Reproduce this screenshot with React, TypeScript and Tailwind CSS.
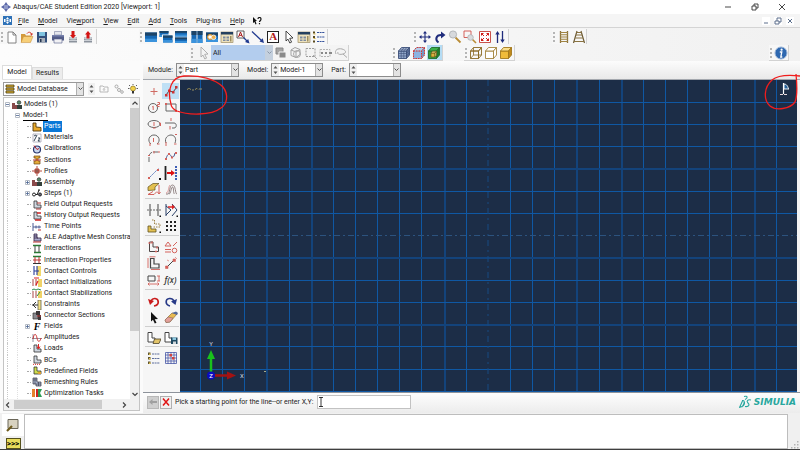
import React from "react";

type Kids = { children?: React.ReactNode };

/* ---------- drawing helpers ---------- */

function Ic({ children }: Kids) {
  return (
    <svg width="14" height="14" viewBox="0 0 14 14" fill="none" className="shrink-0" aria-hidden="true">
      {children}
    </svg>
  );
}

function Tic({ children }: Kids) {
  return (
    <svg width="10" height="10" viewBox="0 0 10 10" fill="none" className="shrink-0" aria-hidden="true">
      {children}
    </svg>
  );
}

function BlueWindow({ x, y, w, h }: { x: number; y: number; w: number; h: number }) {
  return (
    <g>
      <rect x={x} y={y} width={w} height={h} fill="#1668b4" />
      <rect x={x} y={y} width={w} height={h / 3} fill="#1c4468" />
      <rect x={x} y={y + h * 0.65} width={w} height={h * 0.35} fill="#3b93dc" />
    </g>
  );
}

function Cube({ front, top, side, line, mesh }: { front: string; top: string; side: string; line: string; mesh?: boolean }) {
  return (
    <g stroke={line} strokeWidth="0.9" strokeLinejoin="round">
      <path d="M1.5 5h8v7.500h-8z" fill={front} />
      <path d="M1.500 5l3-3.500h8l-3 3.500z" fill={top} />
      <path d="M9.500 5l3-3.500v7.500l-3 3.500z" fill={side} />
      {mesh && <path d="M4.200 5v7.500M6.800 5v7.500M1.500 7.500h8l3-3.500M1.500 10h8l3-3.500M4.200 5l3-3.500M6.800 5l3-3.500M3 3.200h8v7.500" strokeWidth="0.6" />}
    </g>
  );
}

const calendar = (
  <Ic>
    <rect x="1" y="2" width="12" height="10.500" fill="#efe3bd" stroke="#8a7a50" strokeWidth=".6" />
    <rect x="1" y="2" width="12" height="2.500" fill="#24405f" />
    <path d="M3 6.500h2.500v2H3zM6.500 6.500H9v2H6.500zM3 9.500h2.500v1.500H3zM6.500 9.500H9v1.500H6.500z" fill="#7d8ba0" />
    <path d="M10 6h1.500v5.500H10z" fill="#9c8d60" />
  </Ic>
);

const cursor = (fill: string, line: string) => (
  <Ic>
    <path d="M4 1l7 7-3.300.3 1.900 3.800-1.800.9-1.800-3.900L4 11z" fill={fill} stroke={line} strokeWidth=".9" />
  </Ic>
);

const fileIcons: [string, React.ReactNode][] = [
  ["New", <Ic><path d="M3 2h5l3 3v8H3z" fill="#fff" stroke="#777" strokeWidth=".9" /><path d="M8 2v3h3" stroke="#777" strokeWidth=".9" /></Ic>],
  ["Open", <Ic><path d="M1 12V4h4l1 1.500h5V12z" fill="#d49a3c" /><path d="M1 12.500l2.500-6H13l-2.500 6z" fill="#f7cf78" stroke="#c48a34" strokeWidth=".5" /><path d="M7 3.500C8.500 1.500 11 2 11.500 4" stroke="#d23c2c" /><path d="M10 3.500h3L11.700 6z" fill="#d23c2c" /></Ic>],
  ["Save", <Ic><path d="M2 2h10v10.500H2z" fill="#33507d" /><path d="M4 2h6v4H4z" fill="#7fc3e0" /><path d="M4 8h6v4.500H4z" fill="#a9b0ba" /><path d="M5 9h1.500v3H5z" fill="#23344e" /></Ic>],
  ["Print", <Ic><path d="M3.500 1.500h7V5h-7z" fill="#e5e7ee" stroke="#7a80a0" strokeWidth=".6" /><path d="M1 5h12v5.500H1z" fill="#535c88" /><path d="M1 5h12v1.500H1z" fill="#7680ac" /><path d="M3 9h8v4H3z" fill="#f1f1f4" stroke="#535c88" strokeWidth=".6" /></Ic>],
  ["Import", <Ic><path d="M3 7h8v5.500H3z" fill="#8b929c" /><ellipse cx="7" cy="8" rx="4" ry="1.500" fill="#c9ced4" /><path d="M3 10h8v1H3z" fill="#ccd0d6" /><path d="M5.500 1h3v4H10L7 8.500 4 5h1.500z" fill="#d31414" /></Ic>],
  ["Export", <Ic><path d="M3 7h8v5.500H3z" fill="#8b929c" /><ellipse cx="7" cy="8" rx="4" ry="1.500" fill="#c9ced4" /><path d="M3 10h8v1H3z" fill="#ccd0d6" /><path d="M5.500 8.500v-4H4L7 1l3 3.500H8.500v4z" fill="#d31414" /></Ic>],
];

const viewIcons: [string, React.ReactNode][] = [
  ["Create viewport", <Ic><BlueWindow x={1} y={2.5} w={12} h={9.5} /></Ic>],
  ["Cascade", <Ic><BlueWindow x={0.5} y={1} w={9} h={6} /><path d="M3 4.500h11v8.500H3z" fill="#f7f7f7" /><BlueWindow x={4} y={5.5} w={9.5} h={7} /></Ic>],
  ["Tile horizontally", <Ic><BlueWindow x={1} y={1} w={12} h={5.5} /><BlueWindow x={1} y={7.5} w={12} h={5.500} /></Ic>],
  ["Tile vertically", <Ic><BlueWindow x={1.500} y={1} w={5} h={12} /><BlueWindow x={7.500} y={1} w={5} h={12} /></Ic>],
  ["Link viewports", <Ic><BlueWindow x={1} y={2.5} w={12} h={9.5} /><circle cx="5" cy="7" r="2.300" fill="#fff" stroke="#e39a32" strokeWidth="1.200" /><circle cx="8.600" cy="7.300" r="2.300" fill="#f0b04d" stroke="#fff" strokeWidth=".8" /></Ic>],
  ["Annotation manager", calendar],
  ["Text arrow", <Ic><path d="M1 1h7v7H1z" fill="#fff" stroke="#333" strokeWidth=".8" /><path d="M2.500 7l2-5 2 5M3.200 5.300h2.600" stroke="#a31717" /><path d="M7.500 7.500L12 12" stroke="#203a8f" strokeWidth="1.300" /><path d="M13.500 13.500L9 12l3.200-3z" fill="#203a8f" /></Ic>],
  ["Arrow", <Ic><path d="M1 1.500L11 11" stroke="#203a8f" strokeWidth="1.300" /><path d="M13 13L8.500 11.500 11.700 8.300z" fill="#203a8f" /></Ic>],
  ["Text", <span className="flex h-3 w-3 items-center justify-center border border-[#222] bg-white font-['Liberation_Serif',serif] text-[11px] leading-none font-bold text-[#b01818]">A</span>],
  ["Select", cursor("#fff", "#333")],
  ["Manager", calendar],
  ["List", <Ic><path d="M1 1.500h2v2H1zM1 6h2v2H1zM1 10.500h2v2H1z" fill="#5a4a1e" /><path d="M1.500 3.500h2v1h-2zM1.500 8h2v1h-2z" fill="#d8b648" /><path d="M5 2.500h8M5 7h8M5 11.500h8" stroke="#34529c" strokeDasharray="2 .6" /></Ic>],
];

const moveIcons: [string, React.ReactNode][] = [
  ["Pan", <Ic><path d="M7 2v10M2 7h10" stroke="#1f2c7c" strokeWidth="1.100" /><path d="M7 1l2 2.500H5zM7 13l2-2.500H5zM1 7l2.500-2v4zM13 7l-2.500-2v4z" fill="#1f2c7c" /></Ic>],
  ["Rotate", <Ic><path d="M5.500 12.500C2 10 2.500 4.500 9 5" stroke="#1f2c7c" strokeWidth="2" /><path d="M8 1.500l4.500 3.500L8 8.500z" fill="#1f2c7c" /></Ic>],
  ["Magnify", <Ic><path d="M7.500 7.500l5 5" stroke="#b98c34" strokeWidth="1.800" /><circle cx="5" cy="4.500" r="3.600" fill="#d7d9dc" stroke="#a7a9ad" strokeWidth=".8" /></Ic>],
  ["Zoom box", <Ic><path d="M1 1h7v6.500H1z" stroke="#d0504a" strokeWidth=".9" /><path d="M9.500 9.500l3.500 3.500" stroke="#b98c34" strokeWidth="1.600" /><circle cx="7.500" cy="7.500" r="2.800" fill="#d9dbde" stroke="#a7a9ad" strokeWidth=".7" /></Ic>],
  ["Auto-fit", <Ic><path d="M1.500 1.500h11v11h-11z" fill="#fff" stroke="#c8534c" /><path d="M3 3h3L3 6zM11 3v3L8 3zM3 11V8l3 3zM11 11H8l3-3z" fill="#d01d17" /><path d="M4 4l2 2M10 4L8 6M4 10l2-2M10 10L8 8" stroke="#d01d17" /></Ic>],
  ["Cycle", <Ic><path d="M4.500 13V3M9.500 1v10" stroke="#1f2c7c" strokeWidth="1.300" /><path d="M4.500 1l2.200 3.500H2.300zM9.500 13l2.200-3.500H7.300z" fill="#1f2c7c" /></Ic>],
];

const perspIcons: [string, React.ReactNode][] = [
  ["Parallel", <Ic><path d="M3.500 1v12M10.500 1v12" stroke="#87703e" strokeWidth="1.300" /><path d="M3 2.500h8M3 4.800h8M3 7h8M3 9.300h8M3 11.500h8" stroke="#a08442" strokeWidth="1.100" /></Ic>],
  ["Perspective", <Ic><path d="M5 1L1.500 13M9 1l3.500 12" stroke="#6e5d38" strokeWidth="1.200" /><path d="M4.500 2.500h5M4 5h6M3.300 8h7.500M2 11.500h10" stroke="#8a7340" strokeWidth="1.200" /></Ic>],
];

const selIcons: [string, React.ReactNode][] = [
  ["Closest", <Ic><path d="M2 2h7v6H2z" fill="#a4a4a4" stroke="#888" /><path d="M5 6h7v6H5z" fill="#8a8a8a" stroke="#f4f4f4" /></Ic>],
  ["Inside", <Ic><path d="M2 4l4-2.500 5 2v5l-4 3-5-2zM2 4l5 2v5.500M7 6l4-2.500" stroke="#a2a2a2" /><circle cx="8" cy="8" r="3.500" stroke="#aaa" /></Ic>],
  ["Box", <Ic><path d="M2 2.500h9v8H2z" stroke="#9c9c9c" strokeDasharray="2 1" /><path d="M9 9l4 4" stroke="#aaa" /></Ic>],
  ["Edges", <Ic><path d="M1 3.500h10v7H1z" stroke="#b4b4b4" strokeDasharray="2 1" /><path d="M2 7h2M6 7h2M10 7h3" stroke="#888" strokeWidth="2" /></Ic>],
  ["Lasso", <Ic><path d="M2 8C0 4 4 2 8 3s5 4 1 5-6 0-5-2M9 8l4 3.500" stroke="#aaa" /></Ic>],
];

const renderIcons: [string, React.ReactNode][] = [
  ["Wire mesh", <Ic><Cube front="#93a9cc" top="#b4c4de" side="#6c84ae" line="#3c4f78" mesh /></Ic>],
  ["Hidden mesh", <Ic><Cube front="#8db4e2" top="#b5cdea" side="#7297c6" line="#8aa6cc" /><path d="M1.500 5h8v7.500h-8zM1.500 5l3-3.500h8l-3 3.500M12.500 1.500V9l-3 3.500" stroke="#e0352c" strokeDasharray="1.500 1" /></Ic>],
  ["Shaded mesh", <Ic><Cube front="#2f9d3c" top="#3bb04a" side="#1f7a2c" line="#226e2d" /><path d="M4 7h4v4H4z" fill="#d8b23c" stroke="#6a5414" strokeWidth=".7" /><path d="M4 7l1.500-1.800h4L8 7zM8 7l1.500-1.800v4L8 11z" fill="#e6cf77" stroke="#6a5414" strokeWidth=".6" /></Ic>],
];

const styleIcons: [string, React.ReactNode][] = [
  ["Wireframe", <Ic><Cube front="none" top="none" side="none" line="#8a6a24" /><path d="M4.500 1.500V9h8M4.500 9l-3 3.500" stroke="#8a6a24" strokeWidth=".8" /></Ic>],
  ["Hidden", <Ic><Cube front="#fff" top="#fff" side="#fff" line="#a3833c" /></Ic>],
  ["Shaded", <Ic><Cube front="#f0bb3a" top="#fadf8c" side="#c08a1c" line="#a3781c" /></Ic>],
];

/* ---------- sketch palette ---------- */

const G = "#666";
const R = "#d4625c";

const palette: [string, React.ReactNode][][] = [
  [
    ["Point", <Ic><path d="M7 4v7M3.500 7.500h7" stroke="#d06a62" /></Ic>],
    ["Lines", <Ic><path d="M2 11l3-4 4 1 4-5" stroke="#444" /><path d="M1 10h2.500v2.500H1zM4 5.500h2.500V8H4zM8 7h2.500v2.500H8zM11 2h2.500v2.500H11z" fill="#c33" /></Ic>],
    ["Circle", <Ic><circle cx="6" cy="8" r="4.500" stroke={G} /><path d="M5.200 7l1-.8V10M10.500 2.500h2v2h-2v2h2" stroke={R} /></Ic>],
    ["Rectangle", <Ic><path d="M2 4h10v7H2z" stroke={G} /><path d="M1 3h2v2H1zM11 10h2v2h-2z" fill={R} /></Ic>],
    ["Ellipse", <Ic><ellipse cx="7" cy="7" rx="6" ry="3.500" stroke={G} /><path d="M7 5v4M12 6h1.500v3M6 11h2.500" stroke={R} /></Ic>],
    ["Arc tangent", <Ic><path d="M1 6h9c3 0 3 5 0 5H8" stroke={G} /><path d="M7 1v3M6 9v3.500" stroke={R} /></Ic>],
    ["Arc center", <Ic><path d="M4 11C0 8 2 2 7 2s7 6 3 9" stroke={G} /><path d="M6.500 5v4M3 10v3M10 11h2.500" stroke={R} /></Ic>],
    ["Arc points", <Ic><path d="M2 10C0 5 4 2 7 2s6 3 4 8" stroke={G} /><path d="M2 9v4M10 11h2.500M11 1.500h2" stroke={R} /></Ic>],
    ["Fillet", <Ic><path d="M2 13V8c0-3 2-5 5-5h5" stroke={G} strokeDasharray="5 1" /><path d="M1 6.500h2M7 2v2.500M11 3h2" stroke={R} /></Ic>],
    ["Spline", <Ic><path d="M2 10c2-7 4-5 5-3s3 2 4-3" stroke="#44558e" /><path d="M1 9h2v2H1zM4 4h2v2H4zM7 7.500h2v2H7zM11 3h2v2h-2z" fill={R} /></Ic>],
    ["Construction", <Ic><path d="M1 13L12 2" stroke="#5373b8" strokeDasharray="2 1" /><path d="M1 11h2v2H1zM10 3h2v2h-2z" fill={R} /><path d="M12 12h2v2h-2z" fill="#111" /></Ic>],
    ["Project", <Ic><path d="M1.500 0v14" stroke="#222" strokeWidth="1.800" /><path d="M3 7h5" stroke="#d11" strokeWidth="2" /><path d="M7 4l4 3-4 3z" fill="#d11" /><path d="M12 0v14" stroke="#2a4fb0" strokeWidth="1.800" strokeDasharray="2 1" /></Ic>],
    ["Offset", <Ic><path d="M1 5l5-3.500h6L8 5v3L1 8.500z" fill="#e2bf4e" stroke="#61501c" strokeWidth=".7" /><path d="M1 12.500l5-3M1 12.500h6l3-3M12 3v9M10.500 10l1.500 2 1.500-2" stroke={R} /></Ic>],
    ["Wrap", <Ic><path d="M2 12h2c2 0 1-9 4.500-9S11 12 13 12M5 12c2 0 2-7 3.500-7s.5 6 2 7" stroke="#766" strokeWidth=".8" /><path d="M2 11c3 0 2-6 4-8" stroke="#c66" strokeWidth=".6" /></Ic>],
  ],
  [
    ["Split", <Ic><path d="M3 1v12M11 1v12" stroke="#444" /><path d="M0 7h14" stroke="#666" strokeDasharray="2 1" /><path d="M12.500 12.500H14V14h-1.500z" fill="#111" /></Ic>],
    ["Trim", <Ic><path d="M2 1v12M2 3l5 4-5 5M8 1l5 6-5 6" stroke="#2a3f66" /><path d="M4 4h5" stroke="#d22" strokeWidth="1.500" /><path d="M8 1.500l3 2.500-3 2.500z" fill="#d22" /><path d="M12.500 12.500H14V14h-1.500z" fill="#111" /></Ic>],
    ["Move", <Ic><path d="M1 7h3v3h5v3H1z" fill="#e3c152" stroke="#5f5020" strokeWidth=".8" /><path d="M5 1h2.500v4H13v3H6" stroke="#9c8145" strokeDasharray="1.500 1" /><path d="M12.500 12.500H14V14h-1.500z" fill="#111" /></Ic>],
    ["Pattern", <Ic><path d="M2 2h2v2H2zM6 2h2v2H6zM10 2h2v2h-2zM2 6h2v2H2zM6 6h2v2H6zM10 6h2v2h-2zM2 10h2v2H2zM6 10h2v2H6zM10 10h2v2h-2z" fill="#222" /></Ic>],
  ],
  [
    ["Constrain", <Ic><path d="M2.500 2H6v5h5.500v4.500h-9z" stroke="#4d4545" /><path d="M1.500 3h2M5 1.500v2M10 6.500v2M8 11.500h2" stroke={R} strokeWidth="1.500" /></Ic>],
    ["Auto-constrain", <Ic><path d="M1 6h6L4 2zM1 9.500h6M1 12h6M9 6l4-4" stroke={R} /><circle cx="10.500" cy="10.500" r="2.300" stroke={R} /></Ic>],
    ["Auto-dimension", <Ic><path d="M3.500 2.500H7V8h5v4H3.500z" stroke="#444" strokeWidth="1.200" /><path d="M1 2v10M2.500.8h6M4 13.500h9" stroke={R} strokeWidth=".9" /></Ic>],
    ["Dimension", <Ic><path d="M3 11l7-7" stroke="#444" /><path d="M1.500 10H4v2.500H1.500zM9 3h2.500v2.500H9zM11 1l2 2M5 5l-2-1" fill={R} stroke={R} strokeWidth=".6" /></Ic>],
    ["Edit dimension", <Ic><path d="M1 3h7v5H1z" stroke="#444" /><path d="M10 3h3M10 8h3M12 3v5M1 11h11M2.500 9.500L1 11l1.500 1.500M10.500 9.500L12 11l-1.500 1.500" stroke={R} strokeWidth=".9" /></Ic>],
    ["Parameters", <span className="font-['Open_Sans',sans-serif] text-[8px] leading-none font-semibold italic text-[#333]">f(x)</span>],
  ],
  [
    ["Undo", <Ic><path d="M7 12c6-1 5-7 1-7.500C6 4.300 5 5 4 7" stroke="#c91b1b" strokeWidth="1.700" /><path d="M1 5l6 2-4 4z" fill="#c91b1b" /></Ic>],
    ["Redo", <Ic><path d="M6 12C1 11 1 5 5.500 4.500 8 4.300 9 5 10 7" stroke="#283a87" strokeWidth="1.700" /><path d="M13 5L7 7.500l4.500 3.500z" fill="#283a87" /></Ic>],
    ["Pick", <Ic><path d="M4 2l7 7-3.300.2 1.800 3.500-1.700.8L6 9.800 4 11.500z" fill="#111" /></Ic>],
    ["Delete", <Ic><path d="M1 10l7-7 5 1-7 8-4 .500z" fill="#e8ba50" stroke="#80602c" strokeWidth=".6" /><path d="M1 10l3-3 5 1-3 4-4 .500z" fill="#e3a09a" stroke="#80605c" strokeWidth=".5" /><path d="M8 3l4-1.500 2 1.500-1 2z" fill="#536898" /></Ic>],
  ],
  [
    ["Add sketch", <Ic><path d="M1 1.500h4V7h3v4H1z" fill="#fff" stroke="#444" /><path d="M6 12.500l1.500-4.500H14l-2 4.500z" fill="#e2c469" stroke="#4d4328" strokeWidth=".8" /></Ic>],
    ["Save sketch", <Ic><path d="M1 1.500h4V7h3v4H1z" fill="#fff" stroke="#444" /><path d="M7 6.500h6.500V13H7z" fill="#1f4962" /><path d="M8.500 6.500h3.500v2.500H8.500z" fill="#8dc7dd" /><path d="M9 10.500h3V13H9z" fill="#cfd6da" /></Ic>],
  ],
  [
    ["Options list", <Ic><path d="M1 1.500h2.500V4H1zM1 6h2.500v2.500H1zM1 10.500h2.500V13H1z" fill="#5f5530" /><path d="M2 2.500h1.500V4H2zM2 7h1.500v1.500H2zM2 11.500h1.500V13H2z" fill="#e0c048" /><path d="M5 3h8M5 7.500h8M5 12h8" stroke="#5d6d9c" strokeDasharray="2 .6" /></Ic>],
    ["Sketcher grid", <Ic><path d="M1.500 1.500h11v11h-11zM4 1v12M7 1v12M10 1v12M1 4h12M1 7h12M1 10h12" stroke="#4b5ca8" strokeWidth=".8" /><path d="M5.500 3h2.500v2.500H5.500zM8 6h2.500v2.500H8z" fill="#d4423c" /></Ic>],
  ],
];

/* ---------- model tree ---------- */

const L = <path d="M2 1h3v4h4v3H2z" fill="#cfd6df" stroke="#333" strokeWidth=".8" />;

type Row = { t: string; i: React.ReactNode; plus?: boolean; on?: boolean };

const rows: Row[] = [
  { t: "Parts", on: true, i: <Tic><path d="M1 1h3v4l5 .500V9H1z" fill="#e7a92e" stroke="#51390a" strokeWidth=".9" /></Tic> },
  { t: "Materials", i: <Tic><path d="M1 1h8v8H1z" stroke="#99a" strokeWidth=".7" /><path d="M2 8l3-6M2 3l2-1M6 5h2L6 8h2" stroke="#345" /></Tic> },
  { t: "Calibrations", i: <Tic><circle cx="5" cy="5.500" r="3.500" fill="#c9d8f0" stroke="#27356e" strokeWidth="1.200" /><path d="M5 5.500L2 1.500M5 5.500l2-1" stroke="#b22" /></Tic> },
  { t: "Sections", i: <Tic><path d="M2 1h6v2H6v3h2v3H2V6h2V3H2z" fill="#e6ac3a" stroke="#6a4510" strokeWidth=".7" /><path d="M1 5h8" stroke="#b33" /></Tic> },
  { t: "Profiles", i: <Tic><path d="M5 0v10M0 5h10" stroke="#b64a3e" /><path d="M3 3h4v4H3z" fill="#8f5a50" stroke="#b64a3e" /></Tic> },
  { t: "Assembly", plus: true, i: <Tic><path d="M0 3h3v2h2v4H0z" fill="#8a4a4a" /><path d="M5 5h5v4H5z" fill="#33403a" /><circle cx="7" cy="2.500" r="1.800" fill="#5a8a68" stroke="#333" strokeWidth=".7" /></Tic> },
  { t: "Steps (1)", plus: true, i: <Tic><circle cx="2" cy="6.500" r="1.500" stroke="#222" /><path d="M3.500 6.500h2M5 7l2-5M6 2h2" stroke="#222" /><circle cx="8" cy="6.500" r="1.500" fill="#667" stroke="#222" /></Tic> },
  { t: "Field Output Requests", i: <Tic>{L}<path d="M5 3h4M4 9h5" stroke="#a33" /></Tic> },
  { t: "History Output Requests", i: <Tic>{L}<path d="M5 2h4M3 9h6" stroke="#c22" strokeWidth="1.400" /></Tic> },
  { t: "Time Points", i: <Tic><path d="M1 1v8M1 5h8M4 3.500v3M7 3.500v3" stroke="#4a5a92" /><path d="M6 8h3" stroke="#b33" /></Tic> },
  { t: "ALE Adaptive Mesh Constra", i: <Tic><path d="M2 1h3v4h4v3H2zM2 3h3M2 5h4" fill="#aac" stroke="#324" strokeWidth=".8" /><path d="M1 9h8" stroke="#b33" /></Tic> },
  { t: "Interactions", i: <Tic><path d="M1 1.500h8M2 8.500h7" stroke="#297a35" strokeWidth="1.500" /><path d="M3 2v6M7 2v6" stroke="#444" /></Tic> },
  { t: "Interaction Properties", i: <Tic><path d="M1 1.500h8" stroke="#297a35" strokeWidth="1.500" /><path d="M3 2v6M7 2v6M1 5h8" stroke="#b33" /><path d="M1 8.500h8" stroke="#333" /></Tic> },
  { t: "Contact Controls", i: <Tic><path d="M5 0h4v10H5z" fill="#f2d96a" /><path d="M2 0v9M5 0v9M2 5h5" stroke="#2c3f9a" strokeWidth="1.100" /></Tic> },
  { t: "Contact Initializations", i: <Tic><path d="M6 2h4v8H6z" fill="#f0d368" /><path d="M1 2v7M4 2v7" stroke="#a44" /><path d="M2 1h5M6 4L4 8" stroke="#d22" strokeWidth="1.200" /></Tic> },
  { t: "Contact Stabilizations", i: <Tic><path d="M6 3h4v7H6z" fill="#f0d368" /><path d="M1 3v7M4 3v7" stroke="#a44" /><path d="M0 2l2-1 2 1 2-1 3 1M5 8l3-4" stroke="#2b8a4c" /></Tic> },
  { t: "Constraints", i: <Tic><path d="M6 0h3v10H6z" fill="#f4df80" stroke="#665" strokeWidth=".8" /><path d="M0 5h6M4 2L1 5l3 3" stroke="#333" /></Tic> },
  { t: "Connector Sections", i: <Tic><path d="M1 2h5v6H1z" fill="#8a8a90" stroke="#333" strokeWidth=".7" /><path d="M4 0h4v4H4zM6 4h3v5H6z" fill="#3c3638" /><path d="M5 5h4" stroke="#b33" /></Tic> },
  { t: "Fields", plus: true, i: <span className="w-[10px] shrink-0 text-center font-['Liberation_Serif',serif] text-[10px] leading-none font-bold italic text-black">F</span> },
  { t: "Amplitudes", i: <Tic><path d="M1 9V1M0 5.500h10" stroke="#667" strokeWidth=".7" /><path d="M1 6C2 0 4 0 5 5s3 4 4 0" stroke="#c33" /></Tic> },
  { t: "Loads", i: <Tic>{L}<path d="M6.500 0v4M5 2.500L6.500 5 8 2.500" stroke="#d22" /></Tic> },
  { t: "BCs", i: <Tic>{L}<path d="M1 9.300h8" stroke="#d22" strokeDasharray="1 1" /></Tic> },
  { t: "Predefined Fields", i: <Tic><path d="M2 1h3v4h4v3H2z" fill="#cddc4c" stroke="#333" strokeWidth=".8" /><path d="M6 6h3v2H6z" fill="#e0a030" /></Tic> },
  { t: "Remeshing Rules", i: <Tic><path d="M1 1h4v4h4v4H4V7H1z" fill="#aab6cc" stroke="#334" strokeWidth=".7" /><path d="M1 3h4M3 1v6M4 7h5M6.500 5v4" stroke="#334" strokeWidth=".6" /></Tic> },
  { t: "Optimization Tasks", i: <Tic><path d="M0 1h3v8H0z" fill="#e5812c" /><path d="M4 1h2v8H4z" fill="#c22" /><path d="M6 1h4L8 5l2 4H6z" fill="#2b9a52" /></Tic> },
];

function Expander({ sign }: { sign: string }) {
  return (
    <svg width="5" height="5" viewBox="0 0 5 5" className="shrink-0" aria-label={sign}>
      <path d="M.5.5h4v4h-4z" fill="#fff" stroke="#b4bac4" />
      <path d={sign === "expand" ? "M1 2.500h3M2.500 1v3" : "M1 2.500h3"} stroke="#4a6390" strokeWidth=".8" />
    </svg>
  );
}

/* ---------- controls ---------- */

function ToolGroup({ items, className, on }: { items: [string, React.ReactNode][]; className: string; on?: string }) {
  return (
    <div className={`flex h-4 shrink-0 items-stretch border-r border-b border-[#d2d2d2] bg-[#f7f7f7] ${className}`}>
      <span className="ml-px w-[3px] shrink-0 self-center border-l-2 border-dotted border-[#b5b5b5] py-[5px]" />
      {items.map(([name, icon]) => (
        <button
          key={name}
          type="button"
          aria-label={name}
          className={`flex min-w-0 flex-1 items-center justify-center ${name === on ? "bg-[#b5dcf4]" : ""}`}
        >
          {icon}
        </button>
      ))}
    </div>
  );
}

function Chevron() {
  return (
    <span className="pointer-events-none flex w-[7px] items-center justify-center border-l border-[#b0b0b0] bg-[#e3e3e3]">
      <svg width="5" height="4" viewBox="0 0 5 4" fill="none" aria-hidden="true">
        <path d="M.5.5l2 2 2-2" stroke="#555" />
      </svg>
    </span>
  );
}

function Spin() {
  return (
    <svg width="7" height="12" viewBox="0 0 7 12" className="shrink-0" aria-hidden="true">
      <path d="M0 0h7v12H0z" fill="#f0f0f0" />
      <path d="M1.500 4.500h4l-2-2.500zM1.500 7.500h4l-2 2.500z" fill="#555" />
    </svg>
  );
}

function Combo({ id, label, value, width }: { id: string; label: string; value: string; width: string }) {
  return (
    <div className="flex items-center gap-[3px]">
      <label htmlFor={id}>{label}</label>
      <div className={`flex h-[14px] border border-[#8c8c8c] bg-white ${width}`}>
        <Spin />
        <select id={id} defaultValue={value} className="min-w-0 flex-1 appearance-none bg-transparent pt-px pl-px outline-none">
          <option>{value}</option>
        </select>
        <Chevron />
      </div>
    </div>
  );
}

const menus: [string, string, string][] = [
  ["", "F", "ile"],
  ["", "M", "odel"],
  ["Vie", "w", "port"],
  ["", "V", "iew"],
  ["", "E", "dit"],
  ["", "A", "dd"],
  ["", "T", "ools"],
  ["Plu", "g", "-ins"],
  ["", "H", "elp"],
];

function Header() {
  return (
    <header className="shrink-0">
      <div className="flex h-[14px] items-center bg-white pr-[14px] pl-px">
        <svg width="10" height="10" viewBox="0 0 10 10" aria-hidden="true">
          <path d="M5 0l2 3H3zM5 10l2-3H3zM0 5l3-2v4zM10 5L7 3v4z" fill="#5b68a8" />
          <path d="M3 3h4v4H3z" fill="#8f99c8" />
        </svg>
        <h1 className="ml-[2px]">Abaqus/CAE Student Edition 2020 [Viewport: 1]</h1>
        <div className="ml-auto flex gap-[19px]">
          {["M1 4h6", "M1 3h4v4H1zM3 3V1h4v4H5", "M1 1l6 6M7 1L1 7"].map((d, i) => (
            <button key={d} type="button" aria-label={["Minimize", "Restore", "Close"][i]}>
              <svg width="8" height="8" viewBox="0 0 8 8" fill="none"><path d={d} stroke="#333" strokeWidth=".9" /></svg>
            </button>
          ))}
        </div>
      </div>
      <nav className="flex h-[14px] items-center border-b border-[#d4d4d4] bg-[#f5f5f5] pl-[3px]">
        <svg width="9" height="9" viewBox="0 0 9 9" aria-hidden="true">
          <path d="M0 0h9v9H0z" fill="#2f72b8" />
          <path d="M4.500 1l1.500 2H3zM4.500 8L6 6H3zM1 3h1.500v3H1zM6.500 3H8v3H6.500zM3.500 3.500h2v2h-2z" fill="#fff" />
        </svg>
        <div className="ml-[6px] flex gap-[9px] pt-px">
          {menus.map(([a, b, c]) => (
            <button key={b + c} type="button">
              {a}<span className="underline">{b}</span>{c}
            </button>
          ))}
          <button type="button" aria-label="Context help">
            <svg width="9" height="8" viewBox="0 0 9 8"><path d="M0 0l4 4H2.500L3.500 7l-1 .500L1.500 5 0 6z" fill="#111" /><path d="M5 2c0-2 3-2 3 0S6.500 3.500 6.500 5M6.500 6v1.200" stroke="#111" strokeWidth="1.200" fill="none" /></svg>
          </button>
        </div>
        <div className="ml-auto flex gap-1 pr-[6px]">
          {["M2 6h4", "M1 4h4v3H1zM3 4V1h4v4H5", "M2 2l4 4M6 2L2 6"].map((d, i) => (
            <button key={d} type="button" aria-label={["Minimize viewport", "Restore viewport", "Close viewport"][i]} className="bg-white">
              <svg width="8" height="8" viewBox="0 0 8 8" fill="none"><path d={d} stroke="#5c6f8c" /></svg>
            </button>
          ))}
        </div>
      </nav>
      <div className="flex h-[33px] flex-col bg-[#f1f1f1]">
        <div className="flex h-4 bg-[linear-gradient(90deg,#fcfcfc,#f1f1f1)] pt-px">
          <ToolGroup items={fileIcons} className="w-[97px]" />
          <ToolGroup items={viewIcons} className="ml-[42px] w-[189px]" />
          <ToolGroup items={moveIcons} className="ml-[85px] w-[96px]" />
          <ToolGroup items={perspIcons} className="ml-[43px] w-[35px]" />
        </div>
        <div className="flex h-[17px] bg-[linear-gradient(90deg,#fcfcfc,#f1f1f1)] pt-px">
          <div className="ml-[190px] flex h-4 w-[159px] border-r border-b border-[#d2d2d2] bg-[#f4f4f4]">
            <span className="ml-px w-[3px] shrink-0 self-center border-l-2 border-dotted border-[#b5b5b5] py-[5px]" />
            <button type="button" aria-label="Select in viewport" className="ml-[3px]">{cursor("#f4f4f4", "#a8a8a8")}</button>
            <div className="flex h-[15px] w-[62px] shrink-0 bg-[#b3cdee]">
              <select aria-label="Selection filter" defaultValue="All" className="min-w-0 flex-1 appearance-none bg-transparent pt-px pl-[2px] outline-none">
                <option>All</option>
              </select>
              <span className="pointer-events-none flex w-2 items-center justify-center bg-[#c4d0de]">
                <svg width="5" height="4" viewBox="0 0 5 4" fill="none" aria-hidden="true"><path d="M.5.5l2 2 2-2" stroke="#8a97a8" /></svg>
              </span>
            </div>
            {selIcons.map(([name, icon]) => (
              <button key={name} type="button" aria-label={name} className="flex min-w-0 flex-1 items-center justify-center">{icon}</button>
            ))}
          </div>
          <ToolGroup items={renderIcons} className="ml-[43px] w-[51px]" on="Shaded mesh" />
          <ToolGroup items={styleIcons} className="ml-[21px] w-[51px]" />
          <ToolGroup
            items={[["Info", <Ic><circle cx="7" cy="7" r="6" fill="#2e68b0" stroke="#9db6d8" /><circle cx="7.600" cy="3.700" r="1.100" fill="#fff" /><path d="M5.800 6h2l-1 5h1.500" stroke="#fff" strokeWidth="1.300" /></Ic>]]}
            className="mr-[11px] ml-auto w-[20px]"
          />
        </div>
      </div>
    </header>
  );
}

function Arrow({ d }: { d: string }) {
  return (
    <svg width="8" height="8" viewBox="0 0 8 8" fill="none" aria-hidden="true">
      <path d={d} stroke="#444" strokeWidth="1.200" />
    </svg>
  );
}

function ModelPanel() {
  return (
    <aside className="flex w-[143px] shrink-0 flex-col bg-[#fbfbfb] pt-1 pr-[3px] pb-[2px] pl-[2px]">
      <div className="flex h-[14px] items-end" role="tablist">
        <button type="button" role="tab" aria-selected="true" className="h-[14px] w-[30px] border border-b-0 border-[#dcdcdc] bg-white">Model</button>
        <button type="button" role="tab" aria-selected="false" className="h-3 w-[31px] border border-b-0 border-[#dcdcdc] bg-[#ececec]">Results</button>
      </div>
      <div className="flex h-[18px] shrink-0 items-center border-t border-[#e4e4e4] pl-px">
        <div className="flex h-[14px] w-[81px] items-stretch border border-[#9a9a9a] bg-white">
          <span className="flex items-center pl-px">
            <Tic><path d="M1 1h8v2H1zM1 4h8v2H1zM1 7h8v2H1z" fill="#e2b536" stroke="#4a3c10" strokeWidth=".8" /></Tic>
          </span>
          <select aria-label="Tree source" defaultValue="Model Database" className="min-w-0 flex-1 appearance-none bg-transparent pt-px pl-[2px] outline-none">
            <option>Model Database</option>
          </select>
          <Chevron />
        </div>
        <div className="flex flex-1 items-center justify-between pr-[2px] pl-1">
          <Spin />
          <Tic><path d="M1 2h3l1 1h4v5H1zM5 7V4.500M4 5.500l1-1 1 1" stroke="#aaa" strokeWidth=".8" /></Tic>
          <Tic><circle cx="2.500" cy="2.500" r="1.500" stroke="#aaa" /><circle cx="5" cy="6" r="1.500" stroke="#aaa" /><circle cx="8" cy="8" r="1.300" stroke="#aaa" /></Tic>
          <Tic><circle cx="5" cy="4.500" r="2.500" fill="#f2d24c" stroke="#8a7420" strokeWidth=".7" /><path d="M4 7h2v2.500H4z" fill="#333" /><path d="M5 0v1M1 1l1 1M9 1L8 2M0 4.500h1.500M8.500 4.500H10" stroke="#333" strokeWidth=".8" /></Tic>
        </div>
      </div>
      <div className="ml-px flex min-h-0 flex-1 flex-col border border-[#c4c4c4] bg-white">
        <div className="flex min-h-0 flex-1">
          <ul className="flex min-w-0 flex-1 flex-col overflow-hidden pt-px">
            <li className="flex min-h-0 flex-1 items-center gap-[2px] pl-px">
              <Expander sign="collapse" />
              {rows[5].i}
              <span>Models (1)</span>
            </li>
            <li className="flex min-h-0 flex-1 items-center gap-[3px] pl-[11px]">
              <Expander sign="collapse" />
              <span className="border-b border-black leading-[9px]">Model-1</span>
            </li>
            {rows.map((r) => (
              <li key={r.t} className="flex min-h-0 flex-1 items-center">
                <span className="ml-[3px] h-full w-[10px] shrink-0 border-l border-dotted border-[#c8c8c8]" />
                <span className="flex h-full w-[8px] shrink-0 border-l border-dotted border-[#e0e0e0]" />
                <span className="flex w-[7px] shrink-0 items-center">
                  {r.plus ? <Expander sign="expand" /> : <span className="ml-[2px] w-1 border-t border-dotted border-[#aaa]" />}
                </span>
                {r.i}
                <button type="button" className={`ml-px h-full px-px text-left leading-[9px] whitespace-nowrap ${r.on ? "bg-[#0a78d7] text-white" : ""}`}>
                  {r.t}
                </button>
              </li>
            ))}
          </ul>
          <div className="flex w-[9px] shrink-0 flex-col items-center bg-[#f1f1f1]">
            <span className="py-px"><Arrow d="M1.500 5.500L4 3l2.500 2.500" /></span>
            <span className="w-full flex-[224] bg-[#cdcdcd]" />
            <span className="flex-[58]" />
            <span className="py-px"><Arrow d="M1.500 3L4 5.500 6.500 3" /></span>
          </div>
        </div>
        <div className="flex h-[11px] shrink-0 items-center bg-[#f1f1f1]">
          <Arrow d="M5 1.500L2.500 4 5 6.500" />
          <span className="ml-[2px] h-[9px] flex-[88] bg-[#cdcdcd]" />
          <span className="flex-[18]" />
          <Arrow d="M3 1.500L5.500 4 3 6.500" />
          <span className="h-full w-[11px]" />
        </div>
      </div>
    </aside>
  );
}

function Palette() {
  return (
    <div className="flex w-[37px] shrink-0 flex-col bg-[#f6f6f6] pr-px pl-[2px]">
      {palette.map((group, n) => (
        <div
          key={n}
          className={`grid grid-cols-2 pt-[3px] pb-px ${["h-[119px]", "h-[37px]", "h-[54px]", "h-[37px]", "h-[20px]", "h-[20px]"][n]} ${n < 5 ? "border-b border-[#cfcfcf]" : ""}`}
        >
          {group.map(([name, icon]) => (
            <button key={name} type="button" aria-label={name} className={`flex min-h-0 items-center justify-center ${name === "Lines" ? "bg-[#bfe0f5]" : ""}`}>
              {icon}
            </button>
          ))}
        </div>
      ))}
    </div>
  );
}

const STEP = 22.15;

function Viewport() {
  const cols = Array.from({ length: 120 }, (_, i) => i).filter((i) => i !== 13);
  const lines = Array.from({ length: 70 }, (_, i) => i).filter((i) => i !== 6);
  const softCols = [3, 5, 11, 17, 19, 25];
  const softLines = [3, 7, 10];
  return (
    <main className="relative min-w-0 flex-1 overflow-hidden bg-[#1c2d47]">
      <svg className="absolute inset-0 h-full w-full" aria-label="Sketch grid">
        {cols.map((i) => {
          const soft = softCols.includes(i);
          const x = Math.floor(20.4 + STEP * i);
          return <rect key={i} x={x} y="0" width={soft ? 2 : 1} height="100%" fill={soft ? "#13437b" : "#0f58a4"} />;
        })}
        {lines.map((i) => {
          const soft = softLines.includes(i);
          const y = Math.floor(22.200 + 22.250 * i);
          return <rect key={i} x="0" y={y} width="100%" height={soft ? 2 : 1} fill={soft ? "#13437b" : "#0f58a4"} />;
        })}
        <path d="M308 0v2000" stroke="#174a82" strokeDasharray="6 4 2 4" />
        <path d="M0 155.500h4000" stroke="#2c537f" strokeDasharray="6 3 2 3" />
        <path d="M7 9.500l2-1 2 1M12 10h2M15 9.500l2-1 1 1M19 9h3" stroke="#a59c66" strokeWidth=".9" />
        <path d="M31 292v-13" stroke="#19c21b" strokeWidth="2.500" />
        <path d="M31 270l4 9h-8z" fill="#19c21b" />
        <path d="M34 295.500h14" stroke="#a31212" strokeWidth="2.500" />
        <path d="M56 295.500l-9-4v8z" fill="#a31212" />
        <circle cx="31" cy="295.500" r="4" fill="#0a0ac0" />
        <text x="31" y="298" textAnchor="middle" fontSize="6" fill="#fff">Z</text>
        <text x="31" y="266" textAnchor="middle" fontSize="6" fill="#d5d9e0">Y</text>
        <text x="62" y="298" textAnchor="middle" fontSize="6" fill="#d5d9e0">X</text>
        <path d="M84 291.500h2" stroke="#a9ad8a" />
      </svg>
      <svg className="absolute top-[2px] right-[5px]" width="14" height="14" viewBox="0 0 14 14" fill="none" aria-label="View flag">
        <path d="M5.500 1v11" stroke="#fff" strokeWidth="1.200" />
        <path d="M6 2c4 0 4 5 5 5H6z" fill="#27629a" stroke="#fff" strokeWidth=".9" />
        <path d="M2 12.500h8" stroke="#e8d8dc" strokeDasharray="3 1" />
      </svg>
    </main>
  );
}

function PromptBar() {
  return (
    <form className="flex h-[21px] shrink-0 items-center border-t border-[#8d929a] bg-[linear-gradient(180deg,#fdfdfd,#ececec)] pb-[2px] pl-1" onSubmit={(e) => e.preventDefault()}>
      <button type="button" aria-label="Previous" className="flex h-[13px] w-3 items-center justify-center border border-[#b8b8b8] bg-[#cfcfcf]">
        <svg width="8" height="8" viewBox="0 0 8 8"><path d="M0 4l3.500-3v2H8v2H3.500v2z" fill="#a0a0a0" /></svg>
      </button>
      <button type="button" aria-label="Cancel" className="ml-px flex h-[13px] w-3 items-center justify-center border border-[#b0b0b0] bg-[#f0f0f0]">
        <svg width="8" height="8" viewBox="0 0 8 8"><path d="M1 .5l6 7M7 .5l-6 7" stroke="#e01414" strokeWidth="1.500" /></svg>
      </button>
      <label htmlFor="coords" className="ml-[3px] whitespace-nowrap">Pick a starting point for the line--or enter X,Y:</label>
      <div className="ml-1 flex h-[14px] w-[94px] items-center border border-[#c2c2c2] bg-white pl-px">
        <svg width="4" height="10" viewBox="0 0 4 10" fill="none" aria-hidden="true"><path d="M0 .5h4M0 9.500h4M2 0v10" stroke="#222" strokeWidth=".9" /></svg>
        <input id="coords" className="h-full min-w-0 flex-1 outline-none" />
      </div>
      <div className="ml-auto flex items-center gap-px pr-1 text-[#28a79e]">
        <svg width="15" height="14" viewBox="0 0 15 14" fill="none" aria-hidden="true">
          <path d="M6 1.500c4-1 4 1.500 1 3M4 5.500c3-.500 3 2.500 0 6.500M1 12.500c4-.500 6-2.500 5.500-5.500M1.500 12.500L4.500 6M13 5c-3-1-5 1-3 3s1 4-3 3.500" stroke="#28a79e" strokeWidth="1.100" />
        </svg>
        <span className="font-['DejaVu_Sans',sans-serif] text-[9px] leading-none font-bold italic">SIMULIA</span>
      </div>
    </form>
  );
}

export default function App() {
  return (
    <div className="relative flex h-screen w-full flex-col overflow-hidden bg-[#f3f3f3] font-['Roboto','Noto_Sans',sans-serif] text-[7px] leading-[9px] text-[#222]">
      <Header />
      <div className="flex min-h-0 flex-1">
        <ModelPanel />
        <div className="flex min-w-0 flex-1 flex-col">
          <div className="flex h-[19px] shrink-0 items-center gap-2 border-b border-[#a4a8ae] bg-[linear-gradient(180deg,#fcfcfc,#e9e9e9)] pl-[5px]">
            <Combo id="module" label="Module:" value="Part" width="w-[63px]" />
            <Combo id="model" label="Model:" value="Model-1" width="w-[52px]" />
            <Combo id="part" label="Part:" value="" width="w-[52px]" />
          </div>
          <div className="flex min-h-0 flex-1 pr-[3px]">
            <Palette />
            <Viewport />
          </div>
          <PromptBar />
        </div>
      </div>
      <footer className="flex h-[37px] shrink-0 border-b border-[#3f3f3f] bg-[#f0f0f0] pt-px">
        <div className="flex w-6 shrink-0 flex-col pl-[2px]">
          <button type="button" aria-label="Message area" className="flex h-[22px] shrink-0 items-center justify-center bg-white">
            <Ic><path d="M2 1.500h10v9H2z" fill="#d8d2c0" stroke="#6a6658" /><path d="M1 13l5-5" stroke="#6e5b1d" strokeWidth="2.200" /></Ic>
          </button>
          <button type="button" aria-label="Command line" className="flex h-[13px] shrink-0 items-end justify-center">
            <span className="flex h-[11px] w-[15px] items-center justify-center border border-[#55501c] bg-[#e9dc5c] text-[8px] leading-[9px] font-bold text-black">&gt;&gt;&gt;</span>
          </button>
        </div>
        <textarea aria-label="Messages" className="min-w-0 flex-1 resize-none border border-[#bdbdbd] bg-white outline-none" />
        <div className="flex w-3 shrink-0 items-end justify-end pr-px">
          <svg width="9" height="9" viewBox="0 0 9 9" aria-hidden="true"><path d="M7 1h1.500v1.500H7zM7 4h1.500v1.500H7zM7 7h1.500v1.500H7zM4 4h1.500v1.500H4zM4 7h1.500v1.500H4zM1 7h1.500v1.500H1z" fill="#b4b4b4" /></svg>
        </div>
      </footer>
      <svg className="pointer-events-none absolute top-[74px] left-[166px]" width="64" height="44" viewBox="0 0 64 44" fill="none" aria-hidden="true">
        <path d="M5 30C1 16 5 3 18 2c16-1 31 3 39 11 6 8 4 17-2 21-10 8-34 7-44 3-4-2-6-4-6-7" stroke="#f01d1d" strokeWidth="1.300" />
      </svg>
      <svg className="pointer-events-none absolute top-[72px] right-0" width="40" height="40" viewBox="0 0 40 40" fill="none" aria-hidden="true">
        <path d="M40 4c-9-1-22-1-28 4C4 15 3 28 10 34c6 5 20 3 25-4 3-7 2-18 1-28" stroke="#f01d1d" strokeWidth="1.300" />
      </svg>
    </div>
  );
}
